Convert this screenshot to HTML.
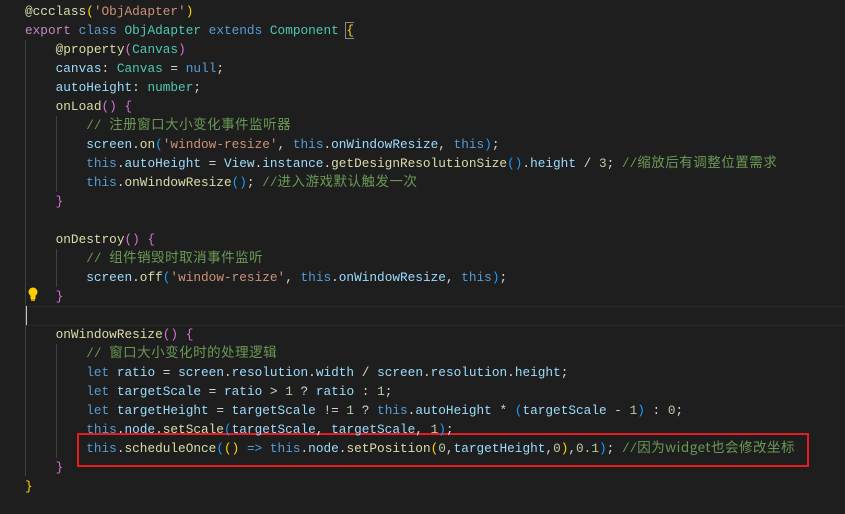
<!DOCTYPE html>
<html><head><meta charset="utf-8"><style>
html,body{margin:0;padding:0;background:#1e1e1e;width:845px;height:514px;overflow:hidden}
#ed{position:relative;width:845px;height:514px;font-family:"Liberation Mono",monospace;font-size:12.75px;color:#d4d4d4}
.l{position:absolute;left:25px;height:19px;line-height:19px;white-space:pre;overflow:hidden}
.z{font-family:"Noto Sans CJK SC",sans-serif;font-size:13.5px;letter-spacing:0.5px;line-height:1}
.k{color:#569cd6}.c{color:#c586c0}.t{color:#4ec9b0}.v{color:#9cdcfe}.f{color:#dcdcaa}.s{color:#ce9178}.m{color:#6a9955}.n{color:#b5cea8}
.b1{color:#ffd700}.b2{color:#da70d6}.b3{color:#179fff}
.g{position:absolute;width:1px;background:#404040}
</style></head><body><div id="ed">
<div style="position:absolute;left:25px;top:306px;width:820px;height:18px;border-top:1px solid #282828;border-bottom:1px solid #282828"></div>
<div style="position:absolute;left:25px;top:306px;width:2px;height:19px;background:#c6c6c6"></div>
<div class="g" style="left:25px;top:40px;height:436px"></div>
<div class="g" style="left:56px;top:116px;height:76px"></div>
<div class="g" style="left:56px;top:249px;height:38px"></div>
<div class="g" style="left:56px;top:344px;height:114px"></div>
<div style="position:absolute;left:77px;top:433px;width:728px;height:30px;border:2px solid #e51c23"></div>
<svg style="position:absolute;left:27px;top:287px" width="12" height="15" viewBox="0 0 12 15"><circle cx="6" cy="5" r="4.5" fill="#ffcc00"/><rect x="3.5" y="8" width="5" height="4" fill="#ffcc00"/><rect x="4" y="12" width="4" height="2" fill="#c8a000"/></svg>
<div class="l" style="top:1.5px"><span class="f">@ccclass</span><span class="b1">(</span><span class="s">'ObjAdapter'</span><span class="b1">)</span></div>
<div class="l" style="top:20.5px"><span class="c">export</span> <span class="k">class</span> <span class="t">ObjAdapter</span> <span class="k">extends</span> <span class="t">Component</span> <span class="b1" style="outline:1px solid #888">{</span></div>
<div class="l" style="top:39.5px">    <span class="f">@property</span><span class="b2">(</span><span class="t">Canvas</span><span class="b2">)</span></div>
<div class="l" style="top:58.5px">    <span class="v">canvas</span>: <span class="t">Canvas</span> = <span class="k">null</span>;</div>
<div class="l" style="top:77.5px">    <span class="v">autoHeight</span>: <span class="t">number</span>;</div>
<div class="l" style="top:96.5px">    <span class="f">onLoad</span><span class="b2">()</span> <span class="b2">{</span></div>
<div class="l" style="top:115.5px">        <span class="m">// <span class="z">注册窗口大小变化事件监听器</span></span></div>
<div class="l" style="top:134.5px">        <span class="v">screen</span>.<span class="f">on</span><span class="b3">(</span><span class="s">'window-resize'</span>, <span class="k">this</span>.<span class="v">onWindowResize</span>, <span class="k">this</span><span class="b3">)</span>;</div>
<div class="l" style="top:153.5px">        <span class="k">this</span>.<span class="v">autoHeight</span> = <span class="v">View</span>.<span class="v">instance</span>.<span class="f">getDesignResolutionSize</span><span class="b3">()</span>.<span class="v">height</span> / <span class="n">3</span>; <span class="m">//<span class="z">缩放后有调整位置需求</span></span></div>
<div class="l" style="top:172.5px">        <span class="k">this</span>.<span class="f">onWindowResize</span><span class="b3">()</span>; <span class="m">//<span class="z">进入游戏默认触发一次</span></span></div>
<div class="l" style="top:191.5px">    <span class="b2">}</span></div>
<div class="l" style="top:229.5px">    <span class="f">onDestroy</span><span class="b2">()</span> <span class="b2">{</span></div>
<div class="l" style="top:248.5px">        <span class="m">// <span class="z">组件销毁时取消事件监听</span></span></div>
<div class="l" style="top:267.5px">        <span class="v">screen</span>.<span class="f">off</span><span class="b3">(</span><span class="s">'window-resize'</span>, <span class="k">this</span>.<span class="v">onWindowResize</span>, <span class="k">this</span><span class="b3">)</span>;</div>
<div class="l" style="top:286.5px">    <span class="b2">}</span></div>
<div class="l" style="top:324.5px">    <span class="f">onWindowResize</span><span class="b2">()</span> <span class="b2">{</span></div>
<div class="l" style="top:343.5px">        <span class="m">// <span class="z">窗口大小变化时的处理逻辑</span></span></div>
<div class="l" style="top:362.5px">        <span class="k">let</span> <span class="v">ratio</span> = <span class="v">screen</span>.<span class="v">resolution</span>.<span class="v">width</span> / <span class="v">screen</span>.<span class="v">resolution</span>.<span class="v">height</span>;</div>
<div class="l" style="top:381.5px">        <span class="k">let</span> <span class="v">targetScale</span> = <span class="v">ratio</span> &gt; <span class="n">1</span> ? <span class="v">ratio</span> : <span class="n">1</span>;</div>
<div class="l" style="top:400.5px">        <span class="k">let</span> <span class="v">targetHeight</span> = <span class="v">targetScale</span> != <span class="n">1</span> ? <span class="k">this</span>.<span class="v">autoHeight</span> * <span class="b3">(</span><span class="v">targetScale</span> - <span class="n">1</span><span class="b3">)</span> : <span class="n">0</span>;</div>
<div class="l" style="top:419.5px">        <span class="k">this</span>.<span class="v">node</span>.<span class="f">setScale</span><span class="b3">(</span><span class="v">targetScale</span>, <span class="v">targetScale</span>, <span class="n">1</span><span class="b3">)</span>;</div>
<div class="l" style="top:438.5px">        <span class="k">this</span>.<span class="f">scheduleOnce</span><span class="b3">(</span><span class="b1">()</span> <span class="k">=&gt;</span> <span class="k">this</span>.<span class="v">node</span>.<span class="f">setPosition</span><span class="b1">(</span><span class="n">0</span>,<span class="v">targetHeight</span>,<span class="n">0</span><span class="b1">)</span>,<span class="n">0.1</span><span class="b3">)</span>; <span class="m">//<span class="z">因为widget也会修改坐标</span></span></div>
<div class="l" style="top:457.5px">    <span class="b2">}</span></div>
<div class="l" style="top:476.5px"><span class="b1">}</span></div>
</div></body></html>
